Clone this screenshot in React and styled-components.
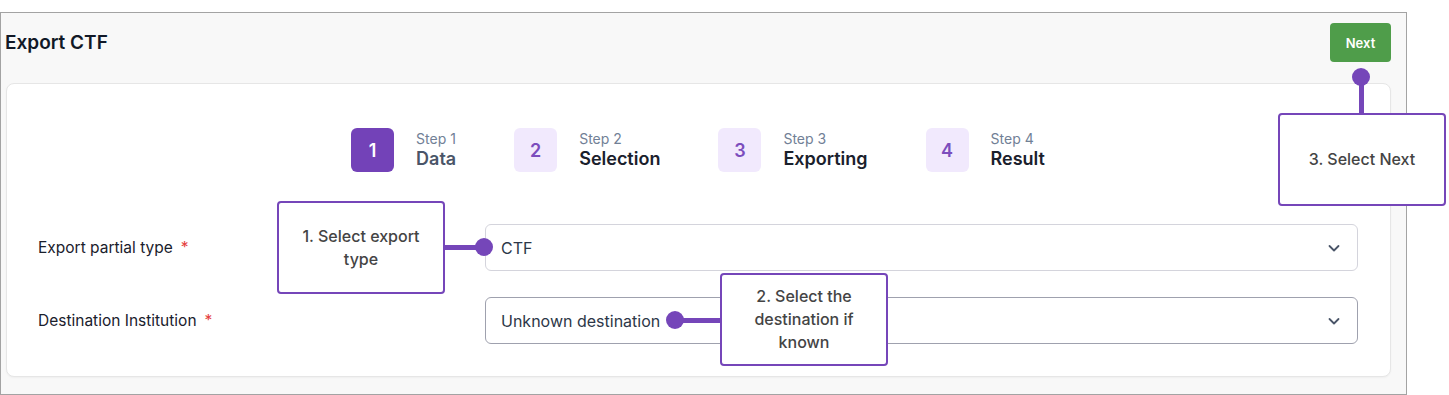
import React from 'react';
import styled, { createGlobalStyle } from 'styled-components';

const GlobalStyle = createGlobalStyle`
  body {
    margin: 0;
    background: #ffffff;
    font-family: Inter, "Noto Sans", sans-serif;
    color: #1a202c;
  }
`;

const Page = styled.div`
  position: relative;
  width: 1449px;
  height: 395px;
  padding-top: 12px;
  box-sizing: border-box;
`;

const Frame = styled.div`
  width: 1407px;
  height: 383px;
  box-sizing: border-box;
  border: 1px solid #a3a3a3;
  background: #f8f8f8;
  display: flex;
  flex-direction: column;
`;

const Header = styled.div`
  display: flex;
  align-items: center;
  justify-content: space-between;
  padding: 10px 15px 0 4px;
  height: 39px;
`;

const Title = styled.h1`
  margin: 0;
  font-size: 19px;
  font-weight: 600;
  color: #111827;
`;

const NextButton = styled.button`
  width: 61px;
  height: 39px;
  border: none;
  border-radius: 4px;
  background: #4f9d4a;
  color: #ffffff;
  font-family: Inter, sans-serif;
  font-size: 13px;
  font-weight: 600;
`;

const Card = styled.div`
  margin: 21px 15px 0 5px;
  height: 294px;
  box-sizing: border-box;
  background: #ffffff;
  border: 1px solid #e6e6e6;
  border-radius: 8px;
  box-shadow: 0 1px 2px rgba(0, 0, 0, 0.04);
  padding: 44px 32px 0 31px;
`;

const Steps = styled.div`
  display: flex;
  justify-content: center;
  gap: 58px;
  margin-bottom: 52px;
`;

const Step = styled.div`
  display: flex;
  align-items: center;
  gap: 22px;
`;

const StepBox = styled.div`
  width: 43px;
  height: 44px;
  border-radius: 6px;
  display: flex;
  align-items: center;
  justify-content: center;
  font-size: 18px;
  font-weight: 600;
  background: ${p => (p.$active ? '#7342b8' : '#f1e9fd')};
  color: ${p => (p.$active ? '#ffffff' : '#7c4dbd')};
`;

const StepText = styled.div`
  display: flex;
  flex-direction: column;
  gap: 1px;
`;

const StepLabel = styled.span`
  font-size: 14px;
  color: #718096;
  line-height: 17px;
`;

const StepName = styled.span`
  font-size: 18px;
  font-weight: 600;
  line-height: 22px;
  color: ${p => (p.$active ? '#4a5568' : '#1a202c')};
`;

const FormRow = styled.div`
  display: grid;
  grid-template-columns: 447px 1fr;
  align-items: center;
  margin-bottom: 26px;
`;

const Label = styled.label`
  font-size: 15.5px;
  color: #1a202c;
`;

const Required = styled.span`
  color: #e53e3e;
  margin-left: 8px;
`;

const Select = styled.div`
  height: 47px;
  box-sizing: border-box;
  border: 1px solid ${p => (p.$focus ? '#9fa1ae' : '#d4d4dc')};
  border-radius: 6px;
  display: flex;
  align-items: center;
  justify-content: space-between;
  padding: 0 16px 0 15px;
  font-size: 16px;
  color: #2d3748;
`;

const Callout = styled.div`
  position: absolute;
  left: ${p => p.$x}px;
  top: ${p => p.$y}px;
  width: 168px;
  height: 93px;
  box-sizing: border-box;
  border: 2px solid #7546b9;
  border-radius: 4px;
  background: #ffffff;
  display: flex;
  align-items: center;
  justify-content: center;
  text-align: center;
  padding: 0 12px;
  font-size: 16px;
  line-height: 23px;
  font-weight: 500;
  color: #444444;
`;

const Line = styled.div`
  position: absolute;
  background: #7546b9;
`;

const Dot = styled.div`
  position: absolute;
  width: 18px;
  height: 18px;
  border-radius: 50%;
  background: #7546b9;
  left: ${p => p.$cx - 9}px;
  top: ${p => p.$cy - 9}px;
`;

const Chevron = () => (
  <svg width="14" height="14" viewBox="0 0 14 14" fill="none">
    <path d="M2.5 5l4.5 4.5L11.5 5" stroke="#4a5568" strokeWidth="1.8" strokeLinecap="round" strokeLinejoin="round" />
  </svg>
);

const steps = [
  { n: 1, name: 'Data' },
  { n: 2, name: 'Selection' },
  { n: 3, name: 'Exporting' },
  { n: 4, name: 'Result' },
];

export default function App() {
  return (
    <Page>
      <GlobalStyle />
      <Frame>
        <Header>
          <Title>Export CTF</Title>
          <NextButton>Next</NextButton>
        </Header>
        <Card>
          <Steps>
            {steps.map(s => (
              <Step key={s.n}>
                <StepBox $active={s.n === 1}>{s.n}</StepBox>
                <StepText>
                  <StepLabel>Step {s.n}</StepLabel>
                  <StepName $active={s.n === 1}>{s.name}</StepName>
                </StepText>
              </Step>
            ))}
          </Steps>
          <FormRow>
            <Label>Export partial type<Required>*</Required></Label>
            <Select>CTF<Chevron /></Select>
          </FormRow>
          <FormRow>
            <Label>Destination Institution<Required>*</Required></Label>
            <Select $focus>Unknown destination<Chevron /></Select>
          </FormRow>
        </Card>
      </Frame>

      <Line style={{ left: 445, top: 245, width: 40, height: 5 }} />
      <Dot $cx={484} $cy={247} />
      <Callout $x={277} $y={201}>1. Select export type</Callout>

      <Line style={{ left: 675, top: 318, width: 46, height: 5 }} />
      <Dot $cx={675} $cy={320} />
      <Callout $x={720} $y={273}>2. Select the destination if known</Callout>

      <Line style={{ left: 1359, top: 77, width: 5, height: 37 }} />
      <Dot $cx={1361} $cy={77} />
      <Callout $x={1278} $y={113}>3. Select Next</Callout>
    </Page>
  );
}
